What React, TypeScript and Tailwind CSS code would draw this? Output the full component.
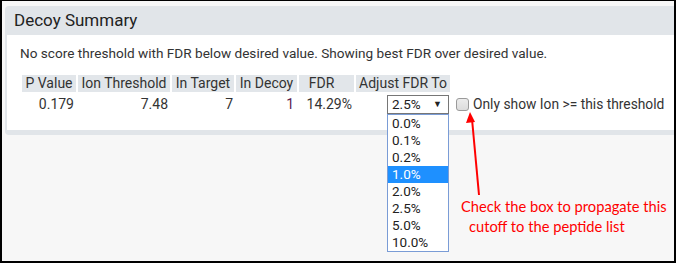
const headers = [
  { label: 'P Value', w: 'w-[54px]', extra: '' },
  { label: 'Ion Threshold', w: 'w-[92px]', extra: '' },
  { label: 'In Target', w: 'w-[62px]', extra: '' },
  { label: 'In Decoy', w: 'w-[61px]', extra: '' },
  { label: 'FDR', w: 'w-[55px]', extra: 'pr-[10px]' },
  { label: 'Adjust FDR To', w: 'w-[94px]', extra: '' },
]

const options = ['0.0%', '0.1%', '0.2%', '1.0%', '2.0%', '2.5%', '5.0%', '10.0%']

function FdrSelect() {
  return (
    <div className="relative ml-auto w-[62px]">
      <div className="flex h-[19px] items-center justify-between border border-[#767676] bg-white pl-[4px] pr-[6px] text-[13.5px] leading-none text-[#222]">
        <span>2.5%</span>
        <span className="text-[9px]">▼</span>
      </div>
      <ul className="absolute left-0 top-[19px] z-10 w-[62px] border border-[#7a9cd6] bg-white text-[13.5px] text-[#222]">
        {options.map((o) => (
          <li
            key={o}
            className={
              o === '1.0%'
                ? 'h-[17px] bg-[#1e90ff] pl-[4px] leading-[17px] text-white'
                : 'h-[17px] pl-[4px] leading-[17px]'
            }
          >
            {o}
          </li>
        ))}
      </ul>
    </div>
  )
}

export default function App() {
  return (
    <div className="relative flex h-[263px] w-[676px] flex-col border-b-2 border-l-2 border-r-2 border-t border-black bg-[#f7f7f7] pl-[3px] pt-[5px] font-['Roboto',sans-serif] text-[#333]">
      <div className="rounded-l-[4px] bg-[#e1e5e9] pb-[5px] pl-[2px]">
        <h2 className="h-[29px] pl-[7px] text-[17px] leading-[29px] text-[#222]">Decoy Summary</h2>
        <div className="h-[95px] bg-white pl-[13px] pt-[9px]">
          <p className="text-[13.6px] leading-[18px]">
            No score threshold with FDR below desired value. Showing best FDR over desired value.
          </p>
          <table className="mt-[11px] border-separate border-spacing-[2px] text-[14px]">
            <thead>
              <tr>
                {headers.map((h) => (
                  <th
                    key={h.label}
                    className={`${h.w} ${h.extra} h-[17px] whitespace-nowrap bg-[#e2e6ea] p-0 text-center font-normal leading-[17px]`}
                  >
                    {h.label}
                  </th>
                ))}
              </tr>
            </thead>
            <tbody>
              <tr className="h-[21px]">
                <td className="p-0 pr-[2px] text-right align-middle">0.179</td>
                <td className="p-0 pr-[2px] text-right align-middle">7.48</td>
                <td className="p-0 pr-[1px] text-right align-middle">7</td>
                <td className="p-0 pr-[3px] text-right align-middle text-[#5a2150]">1</td>
                <td className="p-0 pr-[2px] text-right align-middle">14.29%</td>
                <td className="p-0 pr-[1px] align-middle">
                  <FdrSelect />
                </td>
                <td className="p-0 pl-[4px] align-middle">
                  <label className="flex items-center gap-[4px] whitespace-nowrap text-[13.8px]">
                    <span className="h-[13px] w-[13px] rounded-[3px] border border-[#9a9a9a] bg-gradient-to-b from-[#ececec] to-[#dcdcdc]" />
                    <span>Only show Ion &gt;= this threshold</span>
                  </label>
                </td>
              </tr>
            </tbody>
          </table>
        </div>
      </div>

      <svg className="absolute left-[460px] top-[110px]" width="24" height="86" viewBox="0 0 24 86">
        <line x1="10" y1="8" x2="17" y2="84" stroke="#f00" strokeWidth="2" />
        <polygon points="8,1 4,12 13,11" fill="#f00" />
      </svg>

      <div className="absolute left-[459px] top-[195px] font-['Lato',sans-serif] text-[14.7px] leading-[20px] text-[#f00]">
        <p>Check the box to propagate this</p>
        <p className="pl-[8px]">cutoff to the peptide list</p>
      </div>
    </div>
  )
}
